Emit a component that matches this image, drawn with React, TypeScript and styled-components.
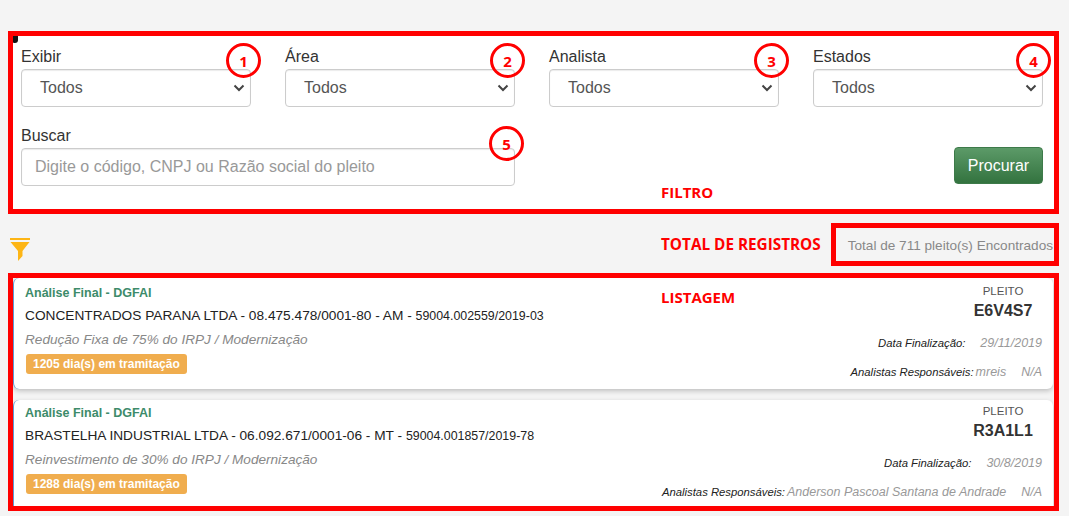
import styled, { createGlobalStyle } from 'styled-components';

const pleitos = [
  {
    id: 'E6V4S7',
    name: 'CONCENTRADOS PARANA LTDA - 08.475.478/0001-80 - AM - ',
    process: '59004.002559/2019-03',
    benefit: 'Redução Fixa de 75% do IRPJ / Modernização',
    days: 1205,
    date: '29/11/2019',
    analyst: 'mreis',
  },
  {
    id: 'R3A1L1',
    name: 'BRASTELHA INDUSTRIAL LTDA - 06.092.671/0001-06 - MT - ',
    process: '59004.001857/2019-78',
    benefit: 'Reinvestimento de 30% do IRPJ / Modernização',
    days: 1288,
    date: '30/8/2019',
    analyst: 'Anderson Pascoal Santana de Andrade',
  },
];

const selects = ['Exibir', 'Área', 'Analista', 'Estados'];

const App = () => {
  return (
    <Page>
      <GlobalStyle />
      <FilterPanel>
        <CornerMark />
        <FilterGrid>
          {selects.map((label, i) => (
            <Field key={label}>
              <Label>{label}</Label>
              <SelectBox>
                Todos
                <Chevron viewBox='0 0 12 8'>
                  <path d='M1.5 1.5 6 6l4.500-4.500' />
                </Chevron>
              </SelectBox>
              <Marker $right={i === 3 ? -8 : -10}>{i + 1}</Marker>
            </Field>
          ))}
          <SearchField>
            <Label>Buscar</Label>
            <SearchInput placeholder='Digite o código, CNPJ ou Razão social do pleito' />
            <Marker $top={-1} $right={-9}>5</Marker>
          </SearchField>
          <ButtonCell>
            <SearchButton>Procurar</SearchButton>
          </ButtonCell>
        </FilterGrid>
        <Note $left={648} $top={146}>FILTRO</Note>
      </FilterPanel>

      <TotalBar>
        <FunnelIcon viewBox='0 0 20 23'>
          <rect x='0' y='0' width='20' height='2' />
          <path d='M0.500 4h19L12.500 13v5l-4.500 5V13z' />
        </FunnelIcon>
        <BarNote>TOTAL DE REGISTROS</BarNote>
        <TotalBox>Total de 711 pleito(s) Encontrados</TotalBox>
      </TotalBar>

      <ListPanel>
        {pleitos.map((p) => (
          <Card key={p.id}>
            <CardMain>
              <Status>Análise Final - DGFAI</Status>
              <Company>
                {p.name}
                <Process>{p.process}</Process>
              </Company>
              <Benefit>{p.benefit}</Benefit>
              <Badge>{p.days} dia(s) em tramitação</Badge>
            </CardMain>
            <CardSide>
              <CodeBlock>
                <CodeTitle>PLEITO</CodeTitle>
                <Code>{p.id}</Code>
              </CodeBlock>
              <MetaRow>
                <MetaLabel>Data Finalização:</MetaLabel>
                <MetaValue $gap={15}>{p.date}</MetaValue>
              </MetaRow>
              <MetaRow>
                <MetaLabel>Analistas Responsáveis:</MetaLabel>
                <MetaValue $gap={2}>{p.analyst}</MetaValue>
                <MetaValue $gap={15}>N/A</MetaValue>
              </MetaRow>
            </CardSide>
          </Card>
        ))}
        <Note $left={648} $top={9}>LISTAGEM</Note>
      </ListPanel>
    </Page>
  );
};

export default App;

// Styling

const GlobalStyle = createGlobalStyle`
  html, body {
    margin: 0;
    padding: 0;
    background: #f4f4f4;
  }

  * {
    box-sizing: border-box;
  }
`;

const Page = styled.div`
  width: 1069px;
  height: 516px;
  padding: 31px 10px 0 8px;
  overflow: hidden;
  font-family: 'Liberation Sans', Arial, sans-serif;
  color: #333;
`;

const FilterPanel = styled.section`
  position: relative;
  height: 183px;
  padding: 12px 11px 0 8px;
  background: #fff;
  border: 5px solid #f00;
`;

const CornerMark = styled.span`
  position: absolute;
  top: 0;
  left: 0;
  width: 5px;
  height: 7px;
  background: #111;
  border-radius: 0 0 3px 1px;
`;

const FilterGrid = styled.div`
  display: grid;
  grid-template-columns: repeat(4, 230px);
  column-gap: 34px;
  row-gap: 20px;
`;

const Field = styled.div`
  position: relative;
`;

const SearchField = styled(Field)`
  grid-column: span 2;
`;

const Label = styled.label`
  display: block;
  height: 21px;
  font-size: 16px;
  line-height: 18px;
  color: #333;
`;

const SelectBox = styled.div`
  display: flex;
  align-items: center;
  justify-content: space-between;
  height: 38px;
  padding: 0 5px 1px 18px;
  font-size: 16px;
  color: #555;
  background: #fff;
  border: 1px solid #ccc;
  border-radius: 4px;
  box-shadow: inset 0 1px 1px rgba(0, 0, 0, 0.08);
`;

const Chevron = styled.svg`
  width: 12px;
  height: 8px;
  fill: none;
  stroke: #444;
  stroke-width: 2;
`;

const SearchInput = styled.input`
  display: block;
  width: 100%;
  height: 38px;
  padding: 0 13px;
  font-family: inherit;
  font-size: 16px;
  color: #555;
  background: #fff;
  border: 1px solid #ccc;
  border-radius: 4px;
  box-shadow: inset 0 1px 1px rgba(0, 0, 0, 0.08);

  &::placeholder {
    color: #999;
    opacity: 1;
  }
`;

const Marker = styled.span<{ $top?: number; $right: number }>`
  position: absolute;
  top: ${(p) => p.$top ?? -5}px;
  right: ${(p) => p.$right}px;
  display: flex;
  align-items: center;
  justify-content: center;
  width: 35px;
  height: 35px;
  font-family: 'Open Sans', sans-serif;
  font-size: 15px;
  font-weight: 700;
  color: #f00;
  border: 3px solid #f00;
  border-radius: 50%;
`;

const ButtonCell = styled.div`
  grid-column: 4;
  display: flex;
  align-items: flex-end;
  justify-content: flex-end;
  padding-bottom: 2px;
`;

const SearchButton = styled.button`
  width: 89px;
  height: 37px;
  padding: 0;
  font-family: inherit;
  font-size: 16px;
  color: #fff;
  background: linear-gradient(to bottom, #5c9a68, #33733f);
  border: 1px solid #3d7a49;
  border-radius: 4px;
`;

const Note = styled.span<{ $left: number; $top: number }>`
  position: absolute;
  left: ${(p) => p.$left}px;
  top: ${(p) => p.$top}px;
  font-family: 'Open Sans', sans-serif;
  font-size: 15px;
  line-height: 20px;
  font-weight: 700;
  color: #f00;
`;

const TotalBar = styled.div`
  display: flex;
  align-items: center;
  height: 43px;
  margin-top: 9px;
`;

const FunnelIcon = styled.svg`
  width: 20px;
  height: 23px;
  margin: 10px 0 0 2px;
  fill: #fdb515;
`;

const BarNote = styled.span`
  margin: 0 0 1px 631px;
  font-family: 'Open Sans', sans-serif;
  font-size: 15.300px;
  font-weight: 700;
  color: #f00;
`;

const TotalBox = styled.div`
  display: flex;
  align-items: center;
  justify-content: flex-end;
  width: 228px;
  height: 43px;
  margin-left: auto;
  padding: 2px 1px 0 0;
  font-size: 13.600px;
  white-space: nowrap;
  color: #888;
  border: 5px solid #f00;
`;

const ListPanel = styled.section`
  position: relative;
  display: flex;
  flex-direction: column;
  gap: 11px;
  height: 238px;
  margin-top: 7px;
  overflow: hidden;
  border: 5px solid #f00;
`;

const Card = styled.article`
  display: flex;
  justify-content: space-between;
  flex: none;
  height: 111px;
  margin-right: 1px;
  background: #fff;
  border-left: 1px solid #5b9bd5;
  border-radius: 6px;
  box-shadow: 0 2px 5px rgba(0, 0, 0, 0.22);

  & + & > * {
    margin-top: -2px;
  }
`;

const CardMain = styled.div`
  display: flex;
  flex-direction: column;
  align-items: flex-start;
  padding: 8px 0 0 11px;
`;

const Status = styled.div`
  font-size: 12.500px;
  line-height: 15px;
  font-weight: 700;
  color: #3d8b6a;
`;

const Company = styled.div`
  margin-top: 7px;
  font-size: 13.700px;
  line-height: 15px;
  color: #222;
`;

const Process = styled.span`
  font-size: 12.400px;
`;

const Benefit = styled.div`
  margin-top: 8px;
  font-size: 13.600px;
  line-height: 15px;
  font-style: italic;
  color: #888;
`;

const Badge = styled.span`
  margin: 7px 0 0 1px;
  padding: 0 7px;
  font-size: 12px;
  line-height: 20px;
  font-weight: 700;
  color: #fff;
  background: #f0ad4e;
  border-radius: 3px;
`;

const CardSide = styled.div`
  display: flex;
  flex-direction: column;
  align-items: flex-end;
  padding: 6px 11px 0 0;
`;

const CodeBlock = styled.div`
  width: 80px;
  margin-right: -1px;
  text-align: center;
`;

const CodeTitle = styled.div`
  font-size: 11.500px;
  line-height: 14px;
  color: #555;
`;

const Code = styled.div`
  margin-top: 4px;
  font-size: 16px;
  line-height: 18px;
  font-weight: 700;
  color: #333;
`;

const MetaRow = styled.div`
  display: flex;
  align-items: baseline;
  margin-top: 16px;
  line-height: 15px;

  & + & {
    margin-top: 14px;
  }
`;

const MetaLabel = styled.span`
  font-size: 11.300px;
  font-style: italic;
  color: #222;
`;

const MetaValue = styled.span<{ $gap: number }>`
  margin-left: ${(p) => p.$gap}px;
  font-size: 12.500px;
  font-style: italic;
  color: #999;
`;
